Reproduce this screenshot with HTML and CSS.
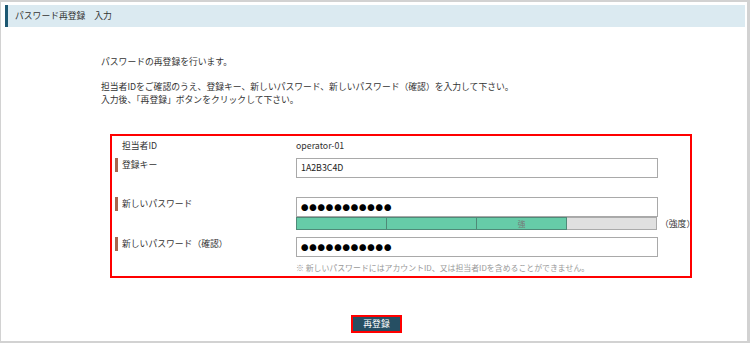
FILE: index.html
```html
<!DOCTYPE html>
<html lang="ja">
  <head>
    <meta charset="UTF-8" />
    <title>パスワード再登録</title>
    <link rel="stylesheet" href="styles.css">
  </head>
  <body>
    <div class="frame">
      <header class="page-title">パスワード再登録　入力</header>

      <main class="content">
        <p class="lead">パスワードの再登録を行います。</p>
        <p class="lead">担当者IDをご確認のうえ、登録キー、新しいパスワード、新しいパスワード（確認）を入力して下さい。<br>入力後、「再登録」ボタンをクリックして下さい。</p>

        <div class="form-box">
          <div class="row row-id">
            <div class="label plain">担当者ID</div>
            <div class="value">operator-01</div>
          </div>
          <div class="row row-key">
            <div class="label">登録キー</div>
            <div class="value"><div class="field">1A2B3C4D</div></div>
          </div>
          <div class="row row-pass">
            <div class="label">新しいパスワード</div>
            <div class="value">
              <div class="field dots">●●●●●●●●●●●</div>
              <div class="meter-line">
                <div class="meter">
                  <span class="seg on"></span>
                  <span class="seg on"></span>
                  <span class="seg on">強</span>
                  <span class="seg"></span>
                </div>
                <span class="meter-label">（強度）</span>
              </div>
            </div>
          </div>
          <div class="row row-confirm">
            <div class="label">新しいパスワード（確認）</div>
            <div class="value">
              <div class="field dots">●●●●●●●●●●●</div>
              <p class="note">※ 新しいパスワードにはアカウントID、又は担当者IDを含めることができません。</p>
            </div>
          </div>
        </div>

        <div class="actions">
          <button class="submit-btn">再登録</button>
        </div>
      </main>
    </div>
  </body>
</html>
```

FILE: styles.css
```css
/* --- Reset & base --- */
*, *::before, *::after {
  box-sizing: border-box;
  margin: 0;
  padding: 0;
}
body {
  font-family: "Noto Sans CJK JP", "Noto Sans", sans-serif;
  font-size: 8.8px;
  line-height: 13px;
  color: #333;
  background: #fff;
}

/* --- Outer frame --- */
.frame {
  height: 343px;
  border-top: 2px solid #d2d2d2;
  border-left: 1px solid #d2d2d2;
  border-right: 3px solid #d2d2d2;
  border-bottom: 2px solid #d2d2d2;
  padding: 3px 2px 0 4px;
}

/* --- Title bar --- */
.page-title {
  height: 22px;
  line-height: 22px;
  background: #dbeaf1;
  border-left: 3px solid #1d5872;
  padding-left: 7px;
  color: #333;
}

/* --- Main area --- */
.content {
  padding: 28px 0 0 96px;
}
.lead + .lead {
  margin-top: 12px;
}

.form-box {
  width: 582px;
  margin: 28px 0 0 9px;
  border: 2px solid #ff0000;
  padding: 3px 0 2px 3px;
}
.row {
  display: flex;
}
.label {
  width: 181px;
  flex: none;
  border-left: 3px solid #a8664e;
  padding-left: 4px;
  line-height: 14px;
  align-self: flex-start;
}
.label.plain {
  border-left-color: transparent;
  line-height: 13px;
}
.value {
  width: 362px;
  flex: none;
}
.row-key {
  margin-top: 6px;
}
.row-pass {
  margin-top: 19px;
}
.row-confirm {
  margin-top: 7px;
}

.field {
  height: 20px;
  border: 1px solid #a9a9a9;
  background: #fff;
  padding: 0 4px;
  line-height: 18px;
  color: #222;
}
.field.dots {
  font-size: 7.4px;
  letter-spacing: 0.9px;
  color: #000;
}

/* --- Strength meter --- */
.meter-line {
  display: flex;
  align-items: center;
  white-space: nowrap;
}
.meter {
  display: flex;
  flex: none;
  width: 361px;
  height: 13px;
}
.seg {
  flex: 1;
  background: #e0e0e0;
  border: 1px solid #aaa;
  border-left: none;
  font-size: 7.6px;
  line-height: 11px;
  text-align: center;
  color: #777;
}
.seg.on {
  background: #66cca8;
  border-color: #4f8a78;
}
.seg:first-child {
  border-left: 1px solid #4f8a78;
}
.meter-label {
  margin-left: 3px;
  line-height: 13px;
}

.note {
  margin-top: 5px;
  font-size: 7.9px;
  line-height: 12px;
  color: #999;
}

/* --- Submit --- */
.actions {
  margin-top: 37px;
  padding-left: 250px;
}
.submit-btn {
  width: 51px;
  height: 18px;
  background: #264f63;
  border: 2px solid #ff0000;
  color: #fff;
  font-family: inherit;
  font-size: 8.8px;
  line-height: 14px;
  cursor: pointer;
}
```
